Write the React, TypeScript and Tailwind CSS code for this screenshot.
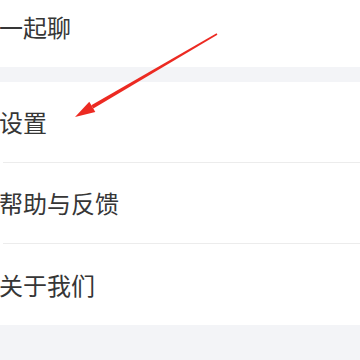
const font = { fontFamily: '"Noto Sans CJK SC", "Noto Sans", sans-serif' };

function Row({ label, divider }: { label: string; divider?: boolean }) {
  return (
    <div className="h-[81px] flex flex-col bg-white">
      <div className="flex-1 flex items-center text-[24px] leading-none text-[#363636] -ml-[1px]">
        {label}
      </div>
      {divider && <div className="h-px bg-[#ececec] ml-[3px]" />}
    </div>
  );
}

export default function App() {
  return (
    <div className="relative w-[360px] h-[360px] overflow-hidden bg-[#f3f4f7]" style={font}>
      <div className="-mt-[14px]">
        <Row label="一起聊" />
        <div className="h-[15px]" />
        <Row label="设置" divider />
        <Row label="帮助与反馈" divider />
        <Row label="关于我们" />
      </div>

      {/* annotation arrow, tapering toward the tail */}
      <svg className="absolute inset-0 pointer-events-none" width="360" height="360" viewBox="0 0 360 360">
        <path d="M217.4 34.7 L216.6 33.3 L91.3 105.2 L93.3 108.6 Z" fill="#ec2a22" />
        <path d="M75 117 L89.3 101.7 L95.3 112.1 Z" fill="#ec2a22" />
      </svg>
    </div>
  );
}
